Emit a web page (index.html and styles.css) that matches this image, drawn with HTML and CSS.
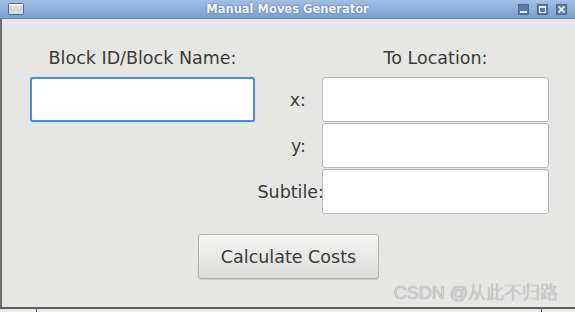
FILE: index.html
```html
<!DOCTYPE html>
<html lang="en">
    <head>
        <meta charset="utf-8">
        <title>Manual Moves Generator</title>
        <link rel="stylesheet" href="styles.css">
    </head>
    <body>
    <div class="window">
        <div class="titlebar">
            <svg class="appIcon" width="16" height="12" viewBox="0 0 16 12">
                <rect x="0.5" y="0.5" width="15" height="11" rx="1" fill="#d8d8d8" stroke="#4c6a96"/>
                <rect x="1" y="1" width="14" height="2" fill="#f2f2f2"/>
            </svg>
            <span class="title">Manual Moves Generator</span>
            <div class="winBtns">
                <svg width="11" height="11" viewBox="0 0 11 11">
                    <rect x="0.5" y="0.5" width="10" height="10" fill="#5a7aa8" stroke="#4a6792"/>
                    <rect x="2" y="7" width="7" height="2" fill="#e8eef6"/>
                </svg>
                <svg width="11" height="11" viewBox="0 0 11 11">
                    <rect x="0.5" y="0.5" width="10" height="10" fill="#5a7aa8" stroke="#4a6792"/>
                    <rect x="2.5" y="2.5" width="6" height="6" fill="none" stroke="#e8eef6"/>
                    <rect x="2" y="2" width="7" height="2" fill="#e8eef6"/>
                </svg>
                <svg width="11" height="11" viewBox="0 0 11 11">
                    <rect x="0.5" y="0.5" width="10" height="10" fill="#5a7aa8" stroke="#4a6792"/>
                    <path d="M2.5 2.5 L8.5 8.5 M8.5 2.5 L2.5 8.5" stroke="#e8eef6" stroke-width="1.8"/>
                </svg>
            </div>
        </div>
        <div class="content">
            <div class="form">
                <div class="head headLeft">Block ID/Block Name:</div>
                <div class="head headRight">To Location:</div>
                <input class="field blockField focused" type="text">
                <label class="lab labX">x:</label>
                <input class="field" type="text">
                <label class="lab labY">y:</label>
                <input class="field" type="text">
                <label class="lab labSub">Subtile:</label>
                <input class="field" type="text">
            </div>
            <div class="btnRow">
                <button class="btn">Calculate Costs</button>
            </div>
            <div class="mark">CSDN @从此不归路</div>
        </div>
        <div class="statusbar">
            <span class="cell first"></span>
            <span class="cell middle"></span>
            <span class="cell"></span>
        </div>
    </div>
    </body>
</html>
```

FILE: styles.css
```css
html,body{margin:0;padding:0;}
body{
    width:575px;
    height:312px;
    overflow:hidden;
    background:#e6e6e4;
    font-family:"DejaVu Sans","Noto Sans",sans-serif;
}
.window{
    width:575px;
    height:312px;
    display:flex;
    flex-direction:column;
}
.titlebar{
    height:18px;
    border-bottom:1px solid #5d82b4;
    background:linear-gradient(#a2bfe4,#7d9fcf);
    display:flex;
    align-items:center;
    position:relative;
}
.appIcon{margin-left:8px;margin-top:-1px;}
.title{
    position:absolute;
    left:0;
    right:0;
    text-align:center;
    font-size:11.5px;
    font-weight:bold;
    color:#f4f6fa;
    text-shadow:0 0 2px #44628c;
    pointer-events:none;
}
.winBtns{
    margin-left:auto;
    margin-right:8px;
    display:flex;
    gap:8px;
}
.content{
    flex:1;
    position:relative;
    border-left:2px solid #6c6c6c;
    border-bottom:2px solid #5e5e5e;
    padding-top:30px;
}
.form{
    display:grid;
    grid-template-columns:225px 67px 227px;
    grid-template-rows:28px 46px 46px 46px;
    margin-left:28px;
}
.head{
    font-size:17.5px;
    line-height:18px;
    color:#3b3b3b;
    text-align:center;
}
.headLeft{grid-column:1;}
.headRight{grid-column:3;}
.field{
    box-sizing:border-box;
    width:100%;
    height:45px;
    margin:0;
    background:#fff;
    border:1px solid #b9b9b7;
    border-radius:3px;
    box-shadow:inset 0 1px 1px rgba(0,0,0,0.06);
    outline:none;
}
.blockField{grid-column:1;grid-row:2;}
.focused{
    border:2px solid #4a8edb;
    box-shadow:0 0 1px #8ab6ea;
}
.lab{
    grid-column:2;
    align-self:center;
    text-align:right;
    font-size:17.5px;
    color:#3b3b3b;
}
.labX,.labY{padding-right:16px;}
.labSub{padding-right:0;margin-right:-2px;}
.btnRow{
    display:flex;
    justify-content:center;
    margin-top:19px;
}
.btn{
    width:181px;
    height:45px;
    font-family:"DejaVu Sans","Noto Sans",sans-serif;
    font-size:17.5px;
    color:#3b3b3b;
    background:linear-gradient(#f5f5f4,#dcdcda);
    border:1px solid #b3b3b1;
    border-radius:3px;
    box-shadow:0 1px 1px rgba(0,0,0,0.12);
}
.mark{
    position:absolute;
    right:17px;
    bottom:3px;
    font-family:"Liberation Sans","Noto Sans CJK SC",sans-serif;
    font-size:18px;
    font-weight:300;
    color:#d2d2d2;
    text-shadow:0 0 1px #8a8a8a;
}
.statusbar{
    height:3px;
    display:flex;
    background:#e9e9e7;
}
.cell{height:100%;}
.first{width:36px;border-right:1px solid #5e5e5e;}
.middle{width:504px;border-right:1px solid #5e5e5e;}
```
